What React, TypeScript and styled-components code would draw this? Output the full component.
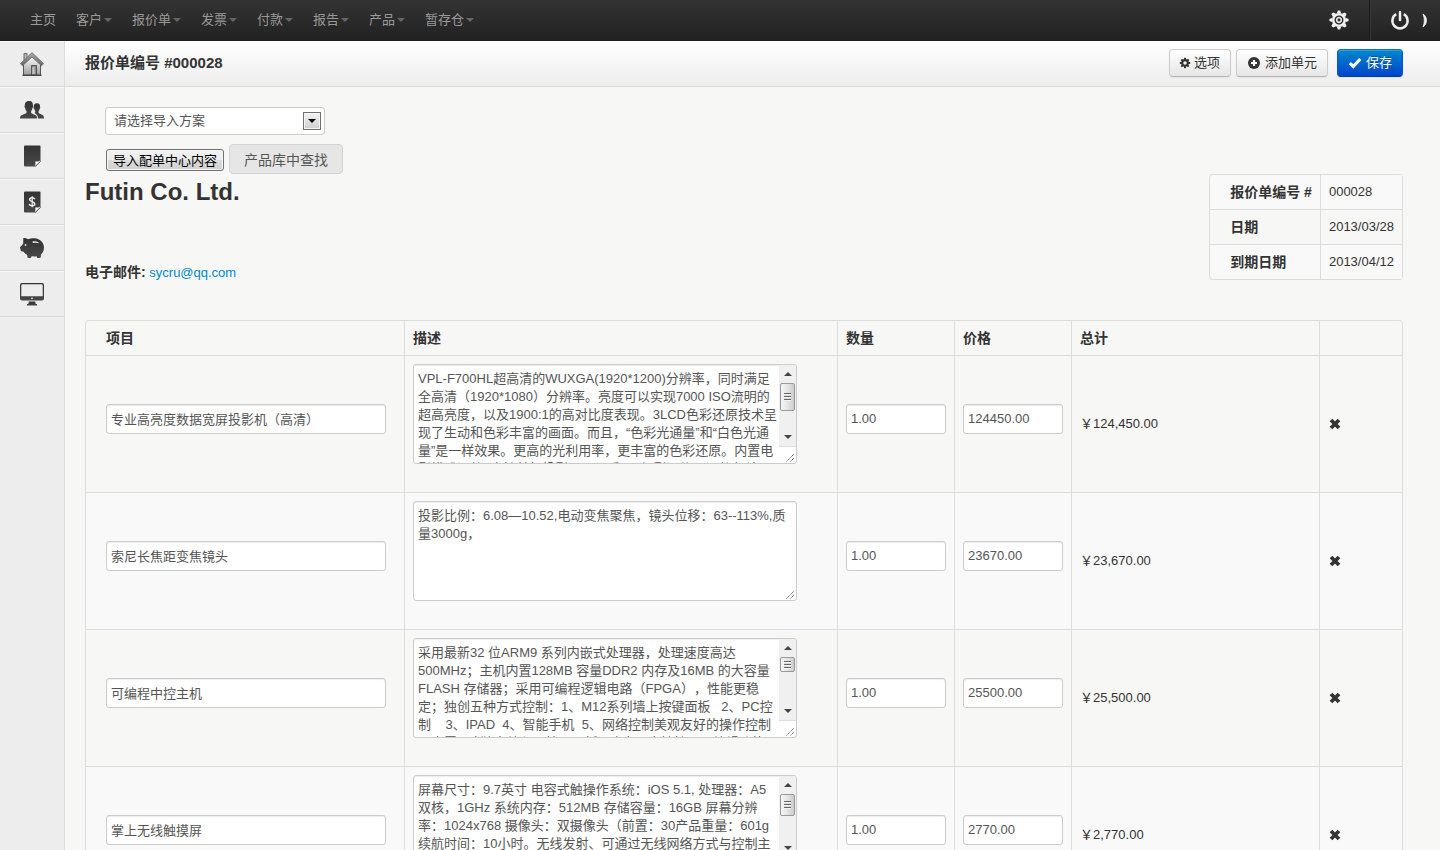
import React from 'react';
import styled, { createGlobalStyle, css } from 'styled-components';

const GlobalStyle = createGlobalStyle`
  *, *::before, *::after { box-sizing: border-box; }
  body {
    margin: 0;
    background: #f7f7f5;
    color: #333;
    font-family: "Liberation Sans", Arial, "Noto Sans CJK SC", sans-serif;
    font-size: 13px;
    line-height: 18px;
    text-spacing-trim: space-all;
  }
  button, input, select, textarea { font: inherit; margin: 0; }
  a { color: #08c; text-decoration: none; }
`;

const Shell = styled.div`
  display: flex;
  flex-direction: column;
  height: 100vh;
  overflow: hidden;
`;

const TopBar = styled.header`
  display: flex;
  flex: none;
  height: 41px;
  padding-left: 20px;
  background: linear-gradient(#333, #222);
  border-bottom: 1px solid #1e1e1e;
`;

const Menu = styled.nav`
  display: flex;
  flex: 1;
`;

const MenuLink = styled.a`
  display: flex;
  align-items: center;
  gap: 2px;
  padding: 0 10px;
  color: #999;
`;

const Caret = styled.span`
  border: 4px solid transparent;
  border-top-color: #666;
  border-bottom: 0;
`;

const TopAction = styled.a<{ $divided?: boolean }>`
  display: flex;
  align-items: center;
  padding: 0 20px;
  color: #eee;
  ${(p) => p.$divided && css`
    padding-right: 12px;
    border-left: 1px solid #1a1a1a;
    box-shadow: inset 1px 0 0 #363636;
  `}
`;

const TopEdge = styled.span`
  display: flex;
  align-items: center;
  width: 18px;
`;

const Columns = styled.div`
  display: flex;
  flex: 1;
  min-height: 0;
`;

const SideBar = styled.nav`
  flex: none;
  width: 65px;
  background: #ededed;
  border-right: 1px solid #ddd;
`;

const SideLink = styled.a`
  display: flex;
  align-items: center;
  justify-content: center;
  height: 46px;
  border-bottom: 1px solid #d9d9d9;
  box-shadow: inset 0 1px 0 #f8f8f8;
`;

const Main = styled.main`
  display: flex;
  flex: 1;
  flex-direction: column;
  min-width: 0;
`;

const TitleBar = styled.div`
  display: flex;
  flex: none;
  align-items: center;
  justify-content: space-between;
  height: 46px;
  padding: 0 37px 2px 20px;
  background: linear-gradient(#fff, #ededed);
  border-bottom: 1px solid #ddd;
`;

const Title = styled.h1`
  margin: 0;
  font-size: 15px;
  line-height: 18px;
`;

const Actions = styled.div`
  display: flex;
  gap: 5px;
`;

const ActionButton = styled.button<{ $primary?: boolean }>`
  display: flex;
  align-items: center;
  gap: 4px;
  height: 28px;
  padding: 0 10px;
  border: 1px solid #ccc;
  border-bottom-color: #b3b3b3;
  border-radius: 4px;
  background: linear-gradient(#fff, #e6e6e6);
  box-shadow: inset 0 1px 0 rgba(255, 255, 255, 0.2), 0 1px 2px rgba(0, 0, 0, 0.05);
  color: #333;
  ${(p) => p.$primary && css`
    margin-left: 4px;
    border-color: #0074cc #05c #003ba0;
    background: linear-gradient(#08c, #04c);
    color: #fff;
    text-shadow: 0 -1px 0 rgba(0, 0, 0, 0.25);
  `}
`;

const Content = styled.div`
  flex: 1;
  min-height: 0;
  padding: 20px 37px 20px 20px;
  overflow-y: auto;
  scrollbar-width: none;
`;

const ImportForm = styled.form`
  display: flex;
  flex-direction: column;
  gap: 9px;
  padding-left: 20px;
`;

const SelectBox = styled.div`
  position: relative;
  width: 220px;
  height: 28px;
`;

const Select = styled.select`
  appearance: none;
  width: 100%;
  height: 100%;
  padding: 0 24px 0 8px;
  border: 1px solid #ccc;
  border-radius: 3px;
  background: #fff;
  color: #555;
`;

const SelectArrow = styled.span`
  position: absolute;
  top: 5px;
  right: 4px;
  display: flex;
  align-items: center;
  justify-content: center;
  width: 18px;
  height: 18px;
  border: 1px solid #707070;
  background: linear-gradient(#f4f4f4, #cfcfcf);
  box-shadow: inset 0 0 0 1px #f6f6f6;
  pointer-events: none;
  &::after {
    content: "";
    border: 4px solid transparent;
    border-top-color: #000;
    border-bottom: 0;
  }
`;

const ButtonRow = styled.div`
  display: flex;
  align-items: center;
  gap: 5px;
  padding-left: 1px;
`;

const NativeButton = styled.button`
  height: 22px;
  margin-top: 2px;
  padding: 1px 6px 0;
  border: 1px solid #707070;
  border-radius: 3px;
  background: linear-gradient(#f2f2f2, #ebebeb 50%, #ddd 50%, #cfcfcf);
  box-shadow: inset 0 0 0 1px #f8f8f8;
  color: #000;
  line-height: 18px;
`;

const SearchButton = styled.button`
  height: 30px;
  padding: 1px 14px 0;
  border: 1px solid #d3d3d3;
  border-radius: 4px;
  background: #e6e6e6;
  color: #555;
  font-size: 14px;
`;

const Summary = styled.section`
  display: flex;
  align-items: flex-start;
  justify-content: space-between;
  margin-bottom: 38px;
`;

const Company = styled.h2`
  margin: 0 0 54px;
  font-size: 24px;
  line-height: 36px;
`;

const Contact = styled.p`
  margin: 0;
  strong { font-size: 14px; line-height: 0; }
`;

const gridTable = css`
  border: 1px solid #ddd;
  border-left: 0;
  border-radius: 4px;
  border-collapse: separate;
  border-spacing: 0;

  th, td {
    padding: 8px;
    border-left: 1px solid #ddd;
    text-align: left;
    vertical-align: middle;
  }
  th { font-size: 14px; line-height: 18px; }
  th:first-child, td:first-child { padding-left: 20px; }
  tr:first-child > :first-child { border-top-left-radius: 4px; }
`;

const InfoTable = styled.table`
  ${gridTable}
  tr + tr > * { border-top: 1px solid #ddd; }
  tr:nth-child(odd) > * { background: #f9f9f9; }
  tr:last-child > :first-child { border-bottom-left-radius: 4px; }
`;

const ItemTable = styled.table`
  ${gridTable}
  width: 100%;
  table-layout: fixed;
  th { height: 34px; }
  td { height: 137px; border-top: 1px solid #ddd; }
  tbody tr:nth-child(even) > td { background: #f9f9f9; }
  tbody tr:first-child > :first-child { border-top-left-radius: 0; }
`;

const Col = styled.col<{ $width?: number }>`
  width: ${(p) => (p.$width ? `${p.$width}px` : 'auto')};
`;

const Field = styled.input<{ $wide?: boolean }>`
  display: block;
  width: ${(p) => (p.$wide ? 280 : 100)}px;
  height: 30px;
  margin-bottom: 11px;
  padding: 0 4px 1px;
  border: 1px solid #ccc;
  border-radius: 3px;
  background: #fff;
  box-shadow: inset 0 1px 1px rgba(0, 0, 0, 0.075);
  color: #555;
`;

const NoteBox = styled.div`
  position: relative;
  display: flex;
  width: 384px;
  height: 100px;
  margin-bottom: 20px;
  border: 1px solid #ccc;
  border-radius: 3px;
  background: #fff;
  box-shadow: inset 0 1px 1px rgba(0, 0, 0, 0.075);
  overflow: hidden;
`;

const Note = styled.textarea`
  flex: 1;
  min-width: 0;
  padding: 5px 0 0 4px;
  border: 0;
  background: transparent;
  color: #555;
  line-height: 18px;
  white-space: pre;
  overflow: hidden;
  resize: none;
`;

const Grip = styled.svg`
  position: absolute;
  right: 1px;
  bottom: 1px;
`;

const Track = styled.div`
  display: flex;
  flex-direction: column;
  width: 17px;
  height: 82px;
  border-bottom: 1px solid #ddd;
  background: #f0f0f0;
`;

const Arrow = styled.span<{ $down?: boolean }>`
  display: flex;
  flex: none;
  align-items: center;
  justify-content: center;
  height: 18px;
  margin-top: ${(p) => (p.$down ? 'auto' : '0')};
  &::after {
    content: "";
    border: 4px solid transparent;
    ${(p) => (p.$down ? 'border-top-color: #444; border-bottom: 0;' : 'border-bottom-color: #444; border-top: 0;')}
  }
`;

const Thumb = styled.span<{ $size: number }>`
  display: flex;
  flex: none;
  flex-direction: column;
  align-items: center;
  justify-content: center;
  width: 15px;
  height: ${(p) => p.$size}px;
  margin-left: 1px;
  border: 1px solid #999;
  border-radius: 2px;
  background: linear-gradient(90deg, #f6f6f6, #e4e4e4 50%, #ccc);
  &::after {
    content: "";
    width: 7px;
    height: 8px;
    background: repeating-linear-gradient(#666 0 1px, #f4f4f4 1px 2px, #ddd 2px 3px);
  }
`;

const RemoveButton = styled.button`
  display: block;
  padding: 0;
  border: 0;
  background: none;
  line-height: 0;
`;

/* ---------- icons ---------- */

const spokes = (n: number) => Array.from({ length: n }, (_, i) => (360 / n) * i);

const BigGear = () => (
  <svg width="20" height="20" viewBox="-10 -10 20 20" fill="#f2f2f2" aria-hidden="true">
    {spokes(8).map((a) => (
      <path key={a} d="M-2.3 -6.4 L-1.1 -9.6 H1.1 L2.3 -6.4 Z" transform={`rotate(${a})`} />
    ))}
    <circle r="5.700" fill="none" stroke="#f2f2f2" strokeWidth="2.400" />
    <circle r="2.300" fill="none" stroke="#e4e4e4" strokeWidth="1.700" />
  </svg>
);

const Power = () => (
  <svg width="20" height="20" viewBox="0 0 20 20" fill="none" stroke="#eee" strokeWidth="2.5" aria-hidden="true">
    <path d="M6.2 4.2 A7.6 7.6 0 1 0 13.8 4.2" />
    <path d="M10 2 V10" strokeLinecap="round" />
  </svg>
);

const Paren = () => (
  <svg width="6" height="16" viewBox="0 0 6 16" fill="#eee" aria-hidden="true">
    <path d="M1 2 C5.6 4.6 5.6 12 1 15 C2.8 11.4 2.8 5.6 1 2 Z" stroke="#eee" strokeWidth="0.9" />
  </svg>
);

const SmallGear = () => (
  <svg width="10" height="12" viewBox="-6 -6 12 12" aria-hidden="true" overflow="visible">
    <circle r="3.400" fill="none" stroke="#333" strokeWidth="2.600" />
    {spokes(8).map((a) => (
      <rect key={a} x="-1.2" y="-6.200" width="2.4" height="2.4" fill="#333" transform={`rotate(${a})`} />
    ))}
  </svg>
);

const Plus = () => (
  <svg width="14" height="12" viewBox="0 0 14 12" aria-hidden="true">
    <circle cx="7" cy="6" r="6" fill="#333" />
    <path d="M7 3 V9 M4 6 H10" stroke="#fff" strokeWidth="2.2" />
  </svg>
);

const Check = () => (
  <svg width="14" height="12" viewBox="0 0 14 12" fill="none" aria-hidden="true">
    <path d="M1.8 6.2 L5.3 9.5 L12.2 2" stroke="#fff" strokeWidth="3.2" />
  </svg>
);

const Cross = () => (
  <svg width="14" height="12" viewBox="0 0 14 12" aria-hidden="true">
    <path d="M3 2 L11 10 M11 2 L3 10" stroke="#333" strokeWidth="3.8" />
  </svg>
);

const SideSvg = styled.svg.attrs({ width: 24, height: 24, viewBox: '0 0 24 24', 'aria-hidden': true })`
  fill: url(#ink);
`;

const Home = () => (
  <SideSvg>
    <defs>
      <linearGradient id="ink" x1="0" y1="0" x2="0" y2="1">
        <stop offset="0" stopColor="#333" />
        <stop offset="1" stopColor="#484848" />
      </linearGradient>
      <linearGradient id="wall" x1="0" y1="0" x2="0" y2="1">
        <stop offset="0" stopColor="#fff" />
        <stop offset="1" stopColor="#999" />
      </linearGradient>
      <linearGradient id="roof" x1="0" y1="0" x2="0" y2="1">
        <stop offset="0" stopColor="#aaa" />
        <stop offset="1" stopColor="#666" />
      </linearGradient>
    </defs>
    <path d="M4 1.5 H7 V8 H4 Z" fill="#bbb" stroke="#666" />
    <path d="M3.5 12 L12 4.5 L20.5 12 V23.5 H3.5 Z" fill="url(#wall)" stroke="#555" />
    <path d="M12 0.7 L23.5 11.5 L21.6 13.8 L12 5 L2.4 13.8 L0.5 11.5 Z" fill="url(#roof)" stroke="#707070" strokeWidth="0.9" strokeLinejoin="round" />
    <path d="M11.5 13.500 H16.5 V23.5 H11.5 Z" fill="#888" stroke="#555" />
    <path d="M12.5 15 H14.5 V22 H12.5 Z" fill="#c8c8c8" />
    <path d="M2.500 22.500 H21.500 V24 H2.500 Z" fill="#444" />
  </SideSvg>
);

const People = () => (
  <SideSvg>
    <path d="M16.8 5.2 C19 5 20.300 6.300 20 8.700 C20.500 9.200 20.200 10.300 19.600 10.800 C19.400 12 19.100 12.600 18.600 13.100 L18.600 14.700 C19 15.700 21.500 16.300 22.800 17.200 C23.700 17.900 24 19 24 20.500 H18 C18 18 17.300 16.700 15.800 15.900 C15.300 15.600 14.900 15.400 14.800 15 C15.300 14.500 15.400 13.900 15.300 13.100 C14.700 12.500 14.400 11.800 14.200 10.800 C13.600 10.300 13.400 9.200 13.800 8.700 C13.500 6.500 14.800 5.200 16.800 5.200 Z" />
    <path d="M9 3 C11.900 2.800 13.200 4.600 12.900 7.500 C13.500 8.100 13.100 9.500 12.500 10 C12.200 11.700 11.700 12.400 11.100 13 L11.100 14.800 C11.600 16 14.300 16.400 15.700 17.300 C16.800 18 17 19 17 20.500 H0 C0 19 0.400 18 1.500 17.300 C3 16.400 5.900 16 6.500 14.800 L6.500 13 C5.900 12.400 5.400 11.700 5.200 10 C4.500 9.500 4.200 8.100 4.800 7.500 C4.500 4.800 6.200 3 9 3 Z" />
  </SideSvg>
);

const Sheet = ({ dollar }: { dollar?: boolean }) => (
  <SideSvg>
    <path d="M4 2.5 Q4 1.5 5 1.5 H19.500 Q20.500 1.500 20.500 2.500 V17.500 L15.500 22.500 H5 Q4 22.5 4 21.5 Z" />
    <path d="M15.200 22 Q16 20 15.600 17.700 Q18 18.200 20 17 L20 17.800 Z" fill="#fff" stroke="#fff" strokeWidth="0.500" />
    <path d="M15.200 22.600 L20.500 17.300" stroke="#444" strokeWidth="0.900" />
    {dollar && (
      <g fill="none" stroke="#eee" strokeWidth="1.5">
        <path d="M14.800 9.200 C14 7.300 9.700 7.300 9.600 9.500 C9.600 12 14.800 11.300 14.800 14 C14.800 16.300 10 16.400 9.200 14" />
        <path d="M12.200 6.200 V17.300" strokeWidth="1.2" />
      </g>
    )}
  </SideSvg>
);

const Pig = () => (
  <SideSvg>
    <path d="M3.3 2 C5.2 1.8 7 2.4 8 3.3 C10 2.4 12 2 14.5 2.2 C20 2.6 24 6.5 24 11.5 C24 15 22.5 17 21 18.5 L20.8 21 Q20.6 22 19.5 22 H17.8 Q17 22 16.8 21 L16.6 20.2 C15.2 20.5 13 20.5 11.5 20.3 L11.3 21.2 Q11 22 10 22 H8.4 Q7.6 22 7.4 21 L7.2 19 C5.5 18.2 4.5 17.2 3.6 15.8 L1.5 15.2 Q0.8 15 0.7 14.2 L0 11.5 Q0 10.7 0.8 10.5 C1.6 10 2.2 8.7 3.2 7.4 Z" />
    <path d="M12.5 5.6 C15 4.800 18 5.5 19 7.2 C17 6.6 15 6.5 12.8 7 Z" fill="#eee" />
    <circle cx="5.5" cy="9" r="0.9" fill="#ddd" />
  </SideSvg>
);

const Monitor = () => (
  <SideSvg>
    <path fillRule="evenodd" d="M2 1 H22 Q24 1 24 3 V16.5 Q24 18.5 22 18.5 H2 Q0 18.5 0 16.5 V3 Q0 1 2 1 Z M2.5 2.2 Q1.3 2.2 1.3 3.4 V14.3 H22.7 V3.4 Q22.7 2.2 21.5 2.2 Z" />
    <path d="M8.8 19.5 H15.2 L15.7 22 H17 V23.5 H7 V22 H8.3 Z" />
    <circle cx="12" cy="16.3" r="0.9" fill="#ddd" />
  </SideSvg>
);

/* ---------- data ---------- */

const menu = ['客户', '报价单', '发票', '付款', '报告', '产品', '暂存仓'];

const info = [
  ['报价单编号 #', '000028'],
  ['日期', '2013/03/28'],
  ['到期日期', '2013/04/12'],
];

interface Item {
  name: string;
  note: string;
  thumb?: number;
  price: string;
  total: string;
}

const items: Item[] = [
  {
    name: '专业高亮度数据宽屏投影机（高清）',
    note: `VPL-F700HL超高清的WUXGA(1920*1200)分辨率，同时满足
全高清（1920*1080）分辨率。亮度可以实现7000 ISO流明的
超高亮度，以及1900:1的高对比度表现。3LCD色彩还原技术呈
现了生动和色彩丰富的画面。而且，“色彩光通量”和“白色光通
量”是一样效果。更高的光利用率，更丰富的色彩还原。内置电
影模式调整, 支持单灯投影画面，采用6级影调修正调整色差`,
    thumb: 28,
    price: '124450.00',
    total: '124,450.00',
  },
  {
    name: '索尼长焦距变焦镜头',
    note: `投影比例：6.08—10.52,电动变焦聚焦，镜头位移：63--113%,质
量3000g，`,
    price: '23670.00',
    total: '23,670.00',
  },
  {
    name: '可编程中控主机',
    note: `采用最新32 位ARM9 系列内嵌式处理器，处理速度高达
500MHz；主机内置128MB 容量DDR2 内存及16MB 的大容量
FLASH 存储器；采用可编程逻辑电路（FPGA），性能更稳
定；独创五种方式控制：1、M12系列墙上按键面板   2、PC控
制    3、IPAD  4、智能手机  5、网络控制美观友好的操作控制
，内置8 路独立编程可控，面板8 路串口支持扩展至编辑功能`,
    thumb: 15,
    price: '25500.00',
    total: '25,500.00',
  },
  {
    name: '掌上无线触摸屏',
    note: `屏幕尺寸：9.7英寸 电容式触操作系统：iOS 5.1, 处理器：A5
双核，1GHz 系统内存：512MB 存储容量：16GB 屏幕分辨
率：1024x768 摄像头：双摄像头（前置：30产品重量：601g
续航时间：10小时。无线发射、可通过无线网络方式与控制主
机通讯`,
    thumb: 22,
    price: '2770.00',
    total: '2,770.00',
  },
];

const NoteField = ({ text, thumb }: { text: string; thumb?: number }) => (
  <NoteBox>
    <Note aria-label="描述" defaultValue={text} />
    {thumb && (
      <Track aria-hidden="true">
        <Arrow />
        <Thumb $size={thumb} />
        <Arrow $down />
      </Track>
    )}
    <Grip width="9" height="9" viewBox="0 0 9 9" fill="none" stroke="#666" strokeDasharray="1.4 0.6" aria-hidden="true">
      <path d="M0.5 8.5 L8 1 M4.5 8.5 L8 5" />
    </Grip>
  </NoteBox>
);

export default function App() {
  return (
    <Shell>
      <GlobalStyle />
      <TopBar>
        <Menu>
          <MenuLink href="#">主页</MenuLink>
          {menu.map((label) => (
            <MenuLink href="#" key={label}>
              {label}
              <Caret />
            </MenuLink>
          ))}
        </Menu>
        <TopAction href="#" aria-label="设置"><BigGear /></TopAction>
        <TopAction href="#" aria-label="退出" $divided><Power /></TopAction>
        <TopEdge><Paren /></TopEdge>
      </TopBar>
      <Columns>
        <SideBar>
          <SideLink href="#" aria-label="主页"><Home /></SideLink>
          <SideLink href="#" aria-label="客户"><People /></SideLink>
          <SideLink href="#" aria-label="报价单"><Sheet /></SideLink>
          <SideLink href="#" aria-label="发票"><Sheet dollar /></SideLink>
          <SideLink href="#" aria-label="付款"><Pig /></SideLink>
          <SideLink href="#" aria-label="系统"><Monitor /></SideLink>
        </SideBar>
        <Main>
          <TitleBar>
            <Title>报价单编号 #000028</Title>
            <Actions>
              <ActionButton type="button"><SmallGear />选项</ActionButton>
              <ActionButton type="button"><Plus />添加单元</ActionButton>
              <ActionButton type="button" $primary><Check />保存</ActionButton>
            </Actions>
          </TitleBar>
          <Content>
            <ImportForm>
              <SelectBox>
                <Select aria-label="导入方案">
                  <option>请选择导入方案</option>
                </Select>
                <SelectArrow />
              </SelectBox>
              <ButtonRow>
                <NativeButton type="button">导入配单中心内容</NativeButton>
                <SearchButton type="button">产品库中查找</SearchButton>
              </ButtonRow>
            </ImportForm>
            <Summary>
              <div>
                <Company>Futin Co. Ltd.</Company>
                <Contact>
                  <strong>电子邮件:</strong> <a href="mailto:sycru@qq.com">sycru@qq.com</a>
                </Contact>
              </div>
              <InfoTable>
                <tbody>
                  {info.map(([label, value]) => (
                    <tr key={label}>
                      <th scope="row">{label}</th>
                      <td>{value}</td>
                    </tr>
                  ))}
                </tbody>
              </InfoTable>
            </Summary>
            <ItemTable>
              <colgroup>
                <Col $width={319} />
                <Col $width={433} />
                <Col $width={117} />
                <Col $width={117} />
                <Col />
                <Col $width={83} />
              </colgroup>
              <thead>
                <tr>
                  <th scope="col">项目</th>
                  <th scope="col">描述</th>
                  <th scope="col">数量</th>
                  <th scope="col">价格</th>
                  <th scope="col">总计</th>
                  <th aria-label="操作" />
                </tr>
              </thead>
              <tbody>
                {items.map((item) => (
                  <tr key={item.name}>
                    <td><Field $wide aria-label="项目" defaultValue={item.name} /></td>
                    <td><NoteField text={item.note} thumb={item.thumb} /></td>
                    <td><Field aria-label="数量" defaultValue="1.00" /></td>
                    <td><Field aria-label="价格" defaultValue={item.price} /></td>
                    <td>￥{item.total}</td>
                    <td><RemoveButton type="button" aria-label="删除"><Cross /></RemoveButton></td>
                  </tr>
                ))}
              </tbody>
            </ItemTable>
          </Content>
        </Main>
      </Columns>
    </Shell>
  );
}
